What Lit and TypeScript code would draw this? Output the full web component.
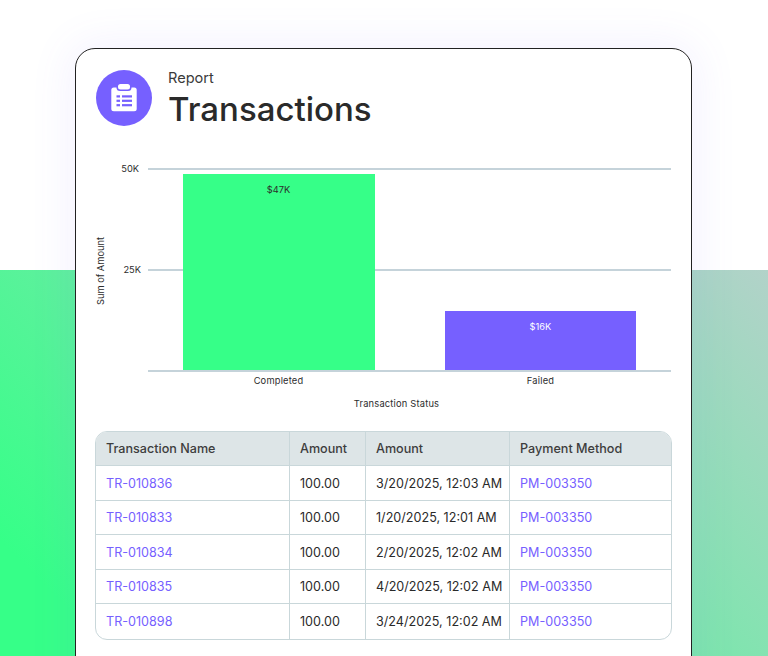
import { LitElement, html, svg, css } from "lit";
import { customElement } from "lit/decorators.js";

const ROWS = [
  ["TR-010836", "100.00", "3/20/2025, 12:03 AM", "PM-003350"],
  ["TR-010833", "100.00", "1/20/2025, 12:01 AM", "PM-003350"],
  ["TR-010834", "100.00", "2/20/2025, 12:02 AM", "PM-003350"],
  ["TR-010835", "100.00", "4/20/2025, 12:02 AM", "PM-003350"],
  ["TR-010898", "100.00", "3/24/2025, 12:02 AM", "PM-003350"],
];

const ICON_ROWS = [25.3, 29.7, 34.1];

@customElement("app-root")
export class AppRoot extends LitElement {
  static styles = css`
    :host {
      display: block;
      width: 768px;
      height: 656px;
      overflow: hidden;
      font-family: Inter, "Noto Sans", sans-serif;
      color: #242424;
    }
    .stage {
      box-sizing: border-box;
      width: 768px;
      height: 656px;
      padding: 48px 76px 0 75px;
      overflow: hidden;
      background-color: #fff;
      background-image: linear-gradient(45deg, #36ff88 0%, #36ff88 10%, #b2d2c9 100%);
      background-size: 100% 386px;
      background-position: 0 270px;
      background-repeat: no-repeat;
    }
    .card {
      box-sizing: border-box;
      width: 617px;
      height: 680px;
      background: #fff;
      border: 1px solid #222;
      border-radius: 20px;
      padding: 21px 19px 0 19px;
      box-shadow: 0 0 44px 4px rgba(118, 96, 255, 0.09);
    }
    .head {
      display: flex;
      align-items: flex-start;
      gap: 16px;
      margin-left: 1px;
    }
    .badge {
      width: 56px;
      height: 56px;
      flex: none;
      display: block;
    }
    .titles {
      display: flex;
      flex-direction: column;
      margin-top: -1px;
    }
    .eyebrow {
      font-size: 14.6px;
      line-height: 18px;
      color: #3a3a3a;
    }
    h1 {
      margin: 0;
      font-size: 33px;
      line-height: 44px;
      font-weight: 500;
      color: #2a2a2a;
    }
    .chart {
      display: block;
      width: 577px;
      height: 264px;
      margin-top: 24px;
    }
    .chart text {
      font-family: Inter, "Noto Sans", sans-serif;
      font-size: 9.3px;
      fill: #2c2c2c;
    }
    .chart text.axis {
      letter-spacing: 0.2px;
    }
    .chart text.on-dark {
      fill: #fff;
    }
    .table {
      box-sizing: border-box;
      width: 577px;
      margin-top: 12px;
      border: 1px solid #c9d7da;
      border-radius: 12px;
      overflow: hidden;
      display: grid;
      grid-template-columns: 194px 76px 144px 1fr;
      font-size: 12.6px;
    }
    .cell {
      box-sizing: border-box;
      height: 34.46px;
      padding: 0 10px;
      display: flex;
      align-items: center;
      white-space: nowrap;
      border-right: 1px solid #c9d7da;
      border-bottom: 1px solid #c9d7da;
      color: #2a2a2a;
    }
    .cell.last { border-right: 0; }
    .cell.bottom { border-bottom: 0; }
    .cell.th {
      background: #dde5e7;
      color: #3d3d3d;
      font-weight: 500;
    }
    .link { color: #7660ff; }
  `;

  render() {
    return html`
      <div class="stage">
        <div class="card">
          <div class="head">
            <svg class="badge" viewBox="0 0 56 56" aria-hidden="true">
              <circle cx="28" cy="28" r="28" fill="#7660ff"></circle>
              <rect x="15.300" y="17.500" width="25.400" height="23.800" rx="2.500" fill="#fff"></rect>
              <rect x="20.500" y="12.500" width="15" height="8.500" rx="3.500" fill="#7660ff"></rect>
              <rect x="22" y="14" width="12" height="5.500" rx="2.500" fill="#fff"></rect>
              ${ICON_ROWS.map(
                (y) => svg`
                  <rect x="20.500" y=${y} width="3.500" height="2.200" fill="#7660ff"></rect>
                  <rect x="26" y=${y} width="10" height="2.200" fill="#7660ff"></rect>
                `,
              )}
            </svg>
            <div class="titles">
              <div class="eyebrow">Report</div>
              <h1>Transactions</h1>
            </div>
          </div>
          <svg class="chart" viewBox="95 155 577 264">
            <g stroke="#c5d3da" stroke-width="2">
              <line x1="148" x2="671" y1="169" y2="169"></line>
              <line x1="148" x2="671" y1="270" y2="270"></line>
              <line x1="148" x2="671" y1="371" y2="371"></line>
            </g>
            <rect x="183" y="174" width="192" height="196" fill="#36ff88"></rect>
            <rect x="445" y="311" width="191" height="59" fill="#7660ff"></rect>
            <text x="139" y="172" text-anchor="end">50K</text>
            <text x="141" y="273" text-anchor="end">25K</text>
            <text x="278.500" y="192.500" text-anchor="middle">$47K</text>
            <text class="on-dark" x="540.500" y="329.500" text-anchor="middle">$16K</text>
            <text class="axis" x="278.500" y="384" text-anchor="middle">Completed</text>
            <text class="axis" x="540.500" y="384" text-anchor="middle">Failed</text>
            <text class="axis" x="396.500" y="407" text-anchor="middle">Transaction Status</text>
            <text transform="translate(104 271) rotate(-90)" text-anchor="middle">Sum of Amount</text>
          </svg>
          <div class="table">
            <div class="cell th">Transaction Name</div>
            <div class="cell th">Amount</div>
            <div class="cell th">Amount</div>
            <div class="cell th last">Payment Method</div>
            ${ROWS.map((r, i) => {
              const b = i === ROWS.length - 1 ? "bottom" : "";
              return html`
                <div class="cell link ${b}">${r[0]}</div>
                <div class="cell ${b}">${r[1]}</div>
                <div class="cell ${b}">${r[2]}</div>
                <div class="cell link last ${b}">${r[3]}</div>
              `;
            })}
          </div>
        </div>
      </div>
    `;
  }
}
